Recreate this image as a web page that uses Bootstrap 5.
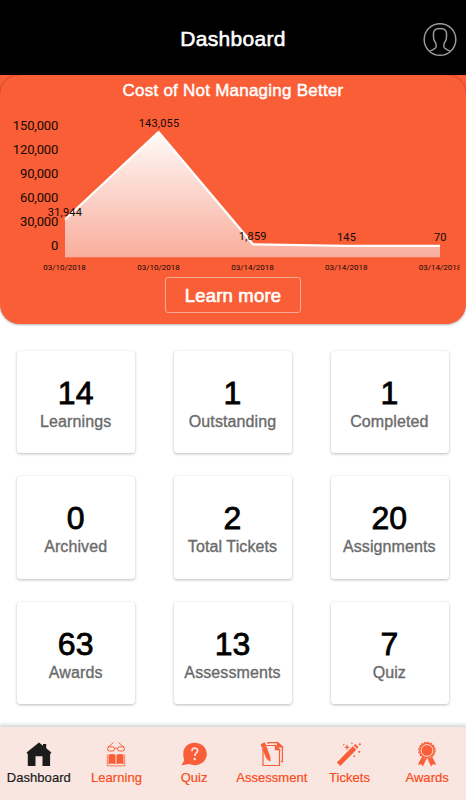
<!DOCTYPE html>
<html lang="en">
<head>
<meta charset="utf-8">
<meta name="viewport" content="width=device-width, initial-scale=1">
<title>Dashboard</title>
<link href="https://cdn.jsdelivr.net/npm/bootstrap@5.3.0/dist/css/bootstrap.min.css" rel="stylesheet">
<style>
  body { font-family: "Liberation Sans", Arial, sans-serif; }
  .screen { height: 800px; overflow: hidden; background: #fff; }
  .topbar { height: 75px; padding: 4px 9px 0; background: #000; display: grid; grid-template-columns: 1fr auto 1fr; }
  .topbar h1 { font-size: 21px; letter-spacing: .3px; line-height: 24px; padding-bottom: 1px; font-weight: 400; -webkit-text-stroke: .55px #fff; }
  .hero-wrap { height: 249px; background: linear-gradient(#f95e37 0 40px, #fff 40px); }
  .hero { height: 249px; background: #f95e37; border-radius: 20px; box-shadow: 0 0 2px rgba(80,20,0,.4), 0 1px 3px rgba(0,0,0,.2); }
  .hero h2 { font-size: 17px; letter-spacing: .24px; line-height: 20px; padding-top: 6px; height: 35px; font-weight: 400; -webkit-text-stroke: .45px #fff; }
  .hero svg text { font-family: Roboto, sans-serif; fill: #140804; }
  .more { width: 136px; height: 36px; margin-top: 2px; padding: 0; border: 1px solid #f8a995; border-radius: 3px; color: #fff; font-size: 18.5px; letter-spacing: .2px; line-height: 33px; -webkit-text-stroke: .6px #fff; }
  .stats { display: grid; grid-template-columns: repeat(3, 1fr); grid-auto-rows: 102.6px; gap: 23px 38.5px; padding: 26.5px 17px 0; }
  .stat { border: 0; border-radius: 3px; box-shadow: 0 1px 3px rgba(0,0,0,.26), 0 0 1px rgba(0,0,0,.08); padding: 25px 1px 0 0; }
  .stat-num { font-size: 32px; line-height: 34px; color: #000; -webkit-text-stroke: .8px #000; }
  .stat-name { font-size: 16px; line-height: 20px; margin-top: 2px; letter-spacing: .1px; color: #6a6a6a; -webkit-text-stroke: .35px #6a6a6a; white-space: nowrap; }
  .tabs { height: 73px; background: #f9e6e0; box-shadow: 0 -1px 4px 1px #ccd2cf; display: grid; grid-template-columns: repeat(6, 1fr); }
  .tabs a { padding-top: 14px; font-size: 13px; line-height: 16px; letter-spacing: .04px; color: #fa4a1c; white-space: nowrap; -webkit-text-stroke: .2px currentColor; }
  .tabs a.active { color: #1c1c1c; }
  .tabs svg { margin-bottom: 3px; }
</style>
</head>
<body>
<div class="screen d-flex flex-column">
  <header class="topbar align-items-center">
    <span></span>
    <h1 class="text-white m-0">Dashboard</h1>
    <svg class="ms-auto" width="34" height="34" viewBox="0 0 34 34" fill="none" stroke="#999" stroke-width="1.5">
      <circle cx="17" cy="16.500" r="15.800"/>
      <path d="M6.800 28.500c2-1.600 5.400-2.300 6.200-4.200.5-1.400.2-3-.3-4.300-1.300-1.500-2-3.300-2.100-5-.5-5.800-.4-9.600 6.400-9.600s6.900 3.800 6.400 9.600c-.1 1.700-.8 3.500-2.100 5-.5 1.300-.8 2.900-.3 4.300.8 1.900 4.200 2.600 6.200 4.200"/>
    </svg>
  </header>

  <div class="hero-wrap">
    <section class="hero d-flex flex-column align-items-center">
      <h2 class="text-white m-0">Cost of Not Managing Better</h2>
      <svg width="466" height="165" viewBox="0 110 466 165">
        <defs>
          <linearGradient id="area" x1="0" y1="131" x2="0" y2="257" gradientUnits="userSpaceOnUse">
            <stop offset="0" stop-color="#fffaf8"/><stop offset="1" stop-color="#f9ae9d"/>
          </linearGradient>
          <clipPath id="plot"><rect x="0" y="110" width="459.500" height="165"/></clipPath>
        </defs>
        <path d="M65 219 158.500 132 253 244.500 346 246H440V257.300H65Z" fill="url(#area)"/>
        <path d="M65 219.500 158.500 132 253 244.300 346 245.900H440" fill="none" stroke="#fff" stroke-width="2.300" stroke-linejoin="bevel"/>
        <g font-size="13" letter-spacing="-.15" text-anchor="end">
          <text x="58.200" y="130">150,000</text><text x="58.200" y="154">120,000</text>
          <text x="58.200" y="178">90,000</text><text x="58.200" y="202">60,000</text>
          <text x="58.200" y="226">30,000</text><text x="58.200" y="249.600">0</text>
        </g>
        <g font-size="11" letter-spacing=".2" text-anchor="middle">
          <text x="65" y="216">31,944</text><text x="159" y="127.400">143,055</text>
          <text x="252.800" y="240">1,859</text><text x="346.500" y="241.400">145</text><text x="440.300" y="241.400">70</text>
        </g>
        <g font-size="8" text-anchor="middle" clip-path="url(#plot)">
          <text x="64.500" y="270">03/10/2018</text><text x="158.500" y="270">03/10/2018</text>
          <text x="252.500" y="270">03/14/2018</text><text x="346.300" y="270">03/14/2018</text><text x="440" y="270">03/14/2018</text>
        </g>
      </svg>
      <button class="btn more" type="button">Learn more</button>
    </section>
  </div>

  <main class="stats text-center">
    <div class="card stat"><div class="stat-num">14</div><div class="stat-name">Learnings</div></div>
    <div class="card stat"><div class="stat-num">1</div><div class="stat-name">Outstanding</div></div>
    <div class="card stat"><div class="stat-num">1</div><div class="stat-name">Completed</div></div>
    <div class="card stat"><div class="stat-num">0</div><div class="stat-name">Archived</div></div>
    <div class="card stat"><div class="stat-num">2</div><div class="stat-name">Total Tickets</div></div>
    <div class="card stat"><div class="stat-num">20</div><div class="stat-name">Assignments</div></div>
    <div class="card stat"><div class="stat-num">63</div><div class="stat-name">Awards</div></div>
    <div class="card stat"><div class="stat-num">13</div><div class="stat-name">Assessments</div></div>
    <div class="card stat"><div class="stat-num">7</div><div class="stat-name">Quiz</div></div>
  </main>

  <nav class="tabs mt-auto">
    <a href="#" class="active d-flex flex-column align-items-center text-decoration-none">
      <svg width="26" height="26" viewBox="0 0 26 26" fill="#1c1c1c"><path d="M.6 11.500 13 1.500l4 3.200V3h3.200v4.300l5.200 4.200-1.300 1.800V25h-7.600v-9.700h-7V25H1.800V13.300Z"/></svg>
      Dashboard</a>
    <a href="#" class="d-flex flex-column align-items-center text-decoration-none">
      <svg width="26" height="26" viewBox="0 0 26 26" fill="none" stroke="#f95e39">
        <path d="m4.500 6.500 6-5M21.500 6.500l-6-5" stroke-width=".9"/>
        <rect x="4.500" y="5.800" width="7" height="4.200" rx="2"/><rect x="14.500" y="5.800" width="7" height="4.200" rx="2"/><path d="M11.500 7.500q1.500-1 3 0"/>
        <path d="M5.500 13.500q4-1.300 7 .3v9.500q-3-1.500-7-.3ZM20.500 13.500q-4-1.300-7 .3v9.500q3-1.500 7-.3Z" fill="#f95e39" stroke="none"/>
        <path d="M4.300 13.500v11.300h7.200q1.500 1 3 0h7.200V13.500" stroke-width=".8"/>
      </svg>
      Learning</a>
    <a href="#" class="d-flex flex-column align-items-center text-decoration-none">
      <svg width="26" height="26" viewBox="0 0 26 26" fill="#f95e39">
        <path d="M13.800 1.800C7 1.800 2.300 6.400 2.300 12.500c0 3.500.3 4.500 1 6.500L.5 24.300l8-1.200c1.500.7 3.500 1.100 5.300 1.100 6.800 0 12-5 12-11.200s-5.200-11.200-12-11.200Z"/>
        <path d="M10.900 10.300c0-4.200 5.700-4.100 5.700-.5 0 2.500-2.900 2.400-2.900 5.200" fill="none" stroke="#fbe3dc" stroke-width="1.700"/>
        <circle cx="13.700" cy="18" r="1.200" fill="#fbe3dc"/>
      </svg>
      Quiz</a>
    <a href="#" class="d-flex flex-column align-items-center text-decoration-none">
      <svg width="26" height="26" viewBox="0 0 26 26" fill="none" stroke="#f95e39" stroke-width="1.200">
        <path d="M7 4.500h9.500l4 4.200V24.500H4V8"/><path d="M16.500 4.500v4.200h4Z" fill="#f95e39"/>
        <path d="M9 3V1.600h9.500l4.900 4.600v14.500h-1.700"/><path d="M18.500 1.600v4.300h4.900Z" fill="#f95e39"/>
        <path d="m2 3.500 3.600-1.700 1.300 3.100-3.700 1.500ZM3.500 7.200l3.700-1.400 3.700 10.300.2 4-3.300-2.600Z" fill="#f95e39" stroke-width=".9"/>
      </svg>
      Assessment</a>
    <a href="#" class="d-flex flex-column align-items-center text-decoration-none">
      <svg width="26" height="26" viewBox="0 0 26 26" fill="#f95e39">
        <path d="m.8 21.500 16-16.200 3.500 3.400-16 16.200Z"/><path d="m17.600 4.500.9-.9q.7-.6 1.400 0l2 2q.5.7-.1 1.300l-.8.9Z"/>
        <path d="m11 3.300.8 2.200 2.200.8-2.200.8-.8 2.200-.8-2.200L8 6.300l2.200-.8Z"/>
        <circle cx="23.800" cy="3.300" r="1.100"/><circle cx="23.300" cy="10.800" r="1.100"/><circle cx="18.300" cy="15.200" r=".9"/><circle cx="16" cy="2.200" r=".8"/><circle cx="7.700" cy="3.800" r=".7"/>
      </svg>
      Tickets</a>
    <a href="#" class="d-flex flex-column align-items-center text-decoration-none">
      <svg width="26" height="26" viewBox="0 0 26 26" fill="#f95e39">
        <path d="m7.500 16.500-3.700 7.200 3.500-.4 1.600 2.200 3.400-7.500ZM18.500 16.500l3.700 7.200-3.500-.4-1.600 2.200-3.400-7.500Z"/>
        <circle cx="13" cy="9.500" r="7.800"/><circle cx="13" cy="9.500" r="8.100" fill="none" stroke="#f95e39" stroke-width="1.300" stroke-dasharray="2.100 1.080"/>
        <circle cx="13" cy="9.500" r="5.900" fill="none" stroke="#fbe3dc" stroke-width="1"/>
      </svg>
      Awards</a>
  </nav>
</div>
<script src="https://cdn.jsdelivr.net/npm/bootstrap@5.3.0/dist/js/bootstrap.bundle.min.js"></script>
</body>
</html>
